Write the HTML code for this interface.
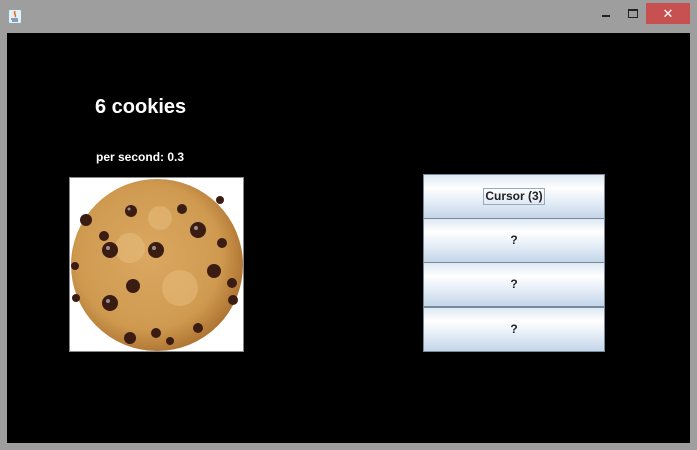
<!DOCTYPE html>
<html><head><meta charset="utf-8"><style>
*{margin:0;padding:0;box-sizing:border-box}
body{width:697px;height:450px;background:#9e9e9e;position:relative;overflow:hidden;font-family:"Liberation Sans",Arial,sans-serif}
.content{position:absolute;left:7px;top:33px;width:683px;height:410px;background:#000}
.close{position:absolute;left:646px;top:3px;width:44px;height:21px;background:#c75050;color:#fff;font-size:13px;text-align:center;line-height:21px}
.min{position:absolute;left:602px;top:15px;width:8px;height:2px;background:#222}
.max{position:absolute;left:628px;top:9px;width:10px;height:9px;border:1px solid #222;border-top-width:2px}
.icon{position:absolute;left:8px;top:9px;width:14px;height:15px;background:#e8eef5;border:1px solid #8aa;border-radius:2px}
.t1{position:absolute;left:95px;top:96px;color:#fff;font-size:20px;font-weight:bold}
.t2{position:absolute;left:96px;top:150px;color:#fff;font-size:12px;font-weight:bold}
.cookie{position:absolute;left:69px;top:177px;width:175px;height:175px;background:#fff;border:1px solid #888}
.btn{position:absolute;left:423px;width:182px;border:1px solid #7a8a9a;background:linear-gradient(#dde8f3 0%,#fff 30%,#e6eef7 60%,#c4d6ea 100%);color:#222;font-size:12px;font-weight:bold;text-align:center}
.f{display:inline-block;border:1px solid #9ab;padding:0 1px;line-height:15px}
</style></head><body>
<div class="icon"><svg width="12" height="13" viewBox="0 0 12 13"><path d="M6 1 C4 4 8 5 6 7" stroke="#e07020" fill="none" stroke-width="1.5"/><path d="M2 9h7M3 11h6" stroke="#4a6fa0" stroke-width="1.2"/></svg></div>
<div class="min"></div><div class="max"></div>
<div class="close">✕</div>
<div class="content"></div>
<div class="t1">6 cookies</div>
<div class="t2">per second: 0.3</div>
<div class="cookie"><svg width="173" height="173" viewBox="0 0 173 173">
<defs><radialGradient id="g" cx="45%" cy="45%" r="60%"><stop offset="0" stop-color="#dba862"/><stop offset="0.7" stop-color="#cf9a50"/><stop offset="1" stop-color="#a86c2c"/></radialGradient></defs>
<ellipse cx="87" cy="87" rx="86" ry="86" fill="url(#g)"/>
<g fill="#e8c080" opacity="0.5"><circle cx="60" cy="70" r="15"/><circle cx="110" cy="110" r="18"/><circle cx="90" cy="40" r="12"/></g>
<g fill="#3a1c12">
<circle cx="61" cy="33" r="6"/><circle cx="112" cy="31" r="5"/><circle cx="128" cy="52" r="8"/><circle cx="16" cy="42" r="6"/>
<circle cx="40" cy="72" r="8"/><circle cx="34" cy="58" r="5"/><circle cx="86" cy="72" r="8"/><circle cx="152" cy="65" r="5"/>
<circle cx="144" cy="93" r="7"/><circle cx="5" cy="88" r="4"/><circle cx="63" cy="108" r="7"/><circle cx="163" cy="122" r="5"/>
<circle cx="40" cy="125" r="8"/><circle cx="86" cy="155" r="5"/><circle cx="60" cy="160" r="6"/><circle cx="128" cy="150" r="5"/><circle cx="100" cy="163" r="4"/>
<circle cx="150" cy="22" r="4"/><circle cx="176" cy="10" r="3"/><circle cx="6" cy="120" r="4"/><circle cx="162" cy="105" r="5"/>
</g>
<g fill="#fff" opacity="0.5"><circle cx="59" cy="31" r="1.5"/><circle cx="126" cy="50" r="2"/><circle cx="84" cy="70" r="2"/><circle cx="38" cy="70" r="2"/><circle cx="38" cy="123" r="2"/></g>
</svg></div>
<div class="btn" style="top:174px;height:45px;line-height:43px"><span class="f">Cursor (3)</span></div>
<div class="btn" style="top:218px;height:45px;line-height:43px">?</div>
<div class="btn" style="top:262px;height:45px;line-height:43px">?</div>
<div class="btn" style="top:307px;height:45px;line-height:43px">?</div>
</body></html>
